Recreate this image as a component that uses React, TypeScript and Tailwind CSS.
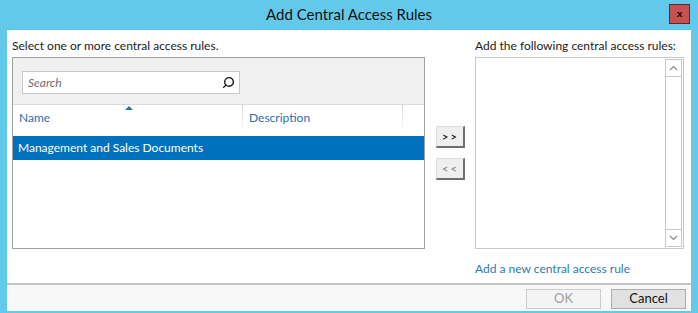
import { Search } from 'lucide-react'

const font = { fontFamily: 'Lato, "Noto Sans", sans-serif' }

function ColumnDivider() {
  return <div className="w-px self-stretch bg-gradient-to-b from-[#d8d8d8] to-white" />
}

export default function App() {
  return (
    <div className="w-[698px] h-[313px] bg-[#63c9ea] flex flex-col text-[12px] text-[#1b1b1b]" style={font}>
      {/* Title bar */}
      <div className="relative h-[30px] flex items-center justify-center">
        <span className="text-[15px] text-[#111] -mt-[1px]">Add Central Access Rules</span>
        <button className="absolute right-[8px] top-[4px] w-[21px] h-[20px] bg-[#c75050] border border-[#5a2a2a] flex items-center justify-center text-[10px] font-bold leading-none text-black pb-[2px]">
          x
        </button>
      </div>

      {/* Content */}
      <div className="mx-[7px] mb-[2px] flex-1 bg-white flex flex-col">
        <div className="flex pl-[5px] pr-[7px] pt-[6px]">
          {/* Left list */}
          <div className="w-[413px] flex flex-col">
            <div className="h-[21px] leading-[20px]">Select one or more central access rules.</div>
            <div className="h-[192px] border border-[#a0a0a0] flex flex-col">
              <div className="h-[47px] bg-[#f0f0f0] border-b border-[#dadada] pl-[9px] pt-[13px]">
                <div className="w-[218px] h-[23px] bg-white border border-[#c8c8c8] flex items-center pl-[5px] pr-[4px]">
                  <span className="flex-1 italic text-[#707070]">Search</span>
                  <Search size={13} strokeWidth={2.5} className="text-[#111] -scale-x-100" />
                </div>
              </div>
              <div className="relative h-[30px] flex">
                <span className="absolute left-[112px] top-[1px] w-0 h-0 border-l-[4px] border-r-[4px] border-b-[4px] border-l-transparent border-r-transparent border-b-[#2a6fb3]" />
                <div className="w-[229px] pl-[6px] pt-[4px] text-[#2a6fb3]">Name</div>
                <ColumnDivider />
                <div className="w-[159px] pl-[6px] pt-[4px] text-[#2a6fb3]">Description</div>
                <ColumnDivider />
              </div>
              <div className="h-[24px] mt-[1px] bg-[#0072bd] text-white pl-[5px] flex items-center">
                Management and Sales Documents
              </div>
            </div>
          </div>

          {/* Move buttons */}
          <div className="w-[50px] flex flex-col items-center pt-[90px] gap-[10px]">
            <button className="w-[29px] h-[22px] bg-[#efefef] border border-[#dcdcdc] border-r-2 border-b-2 border-r-[#6e6e6e] border-b-[#6e6e6e] text-[11px] font-semibold text-[#111] leading-none tracking-[2px] pl-[2px]">
              &gt;&gt;
            </button>
            <button className="w-[29px] h-[22px] bg-[#efefef] border border-[#dcdcdc] border-r-2 border-b-2 border-r-[#6e6e6e] border-b-[#6e6e6e] text-[11px] font-semibold text-[#8a8a8a] leading-none tracking-[2px] pl-[2px]">
              &lt;&lt;
            </button>
          </div>

          {/* Right list */}
          <div className="w-[209px] flex flex-col">
            <div className="h-[21px] leading-[20px]">Add the following central access rules:</div>
            <div className="h-[192px] border border-[#c8c8c8] flex justify-end p-[1px]">
              <div className="w-[17px] border border-[#c8c8c8] flex flex-col justify-between">
                <div className="h-[17px] border-b border-[#c8c8c8] flex items-center justify-center text-[#8a8a8a]">
                  <svg width="9" height="6" viewBox="0 0 9 6"><path d="M1 5 L4.5 1.5 L8 5" fill="none" stroke="currentColor" strokeWidth="1.2" /></svg>
                </div>
                <div className="h-[17px] border-t border-[#c8c8c8] flex items-center justify-center text-[#8a8a8a]">
                  <svg width="9" height="6" viewBox="0 0 9 6"><path d="M1 1 L4.5 4.5 L8 1" fill="none" stroke="currentColor" strokeWidth="1.2" /></svg>
                </div>
              </div>
            </div>
            <div className="pt-[11px] text-[#2a7ab5]">Add a new central access rule</div>
          </div>
        </div>

        {/* Footer */}
        <div className="mt-auto h-[28px] border-t-2 border-[#c4c4c4] bg-[#f8f8f8] flex items-center justify-end gap-[10px] pr-[5px] pt-[1px]">
          <button className="w-[75px] h-[20px] bg-[#f4f4f4] border border-[#cccccc] text-[#a0a0a0] text-[13px] leading-none">OK</button>
          <button className="w-[75px] h-[20px] bg-[#e1e1e1] border border-[#adadad] text-[#111] text-[13px] leading-none">Cancel</button>
        </div>
      </div>
    </div>
  )
}
